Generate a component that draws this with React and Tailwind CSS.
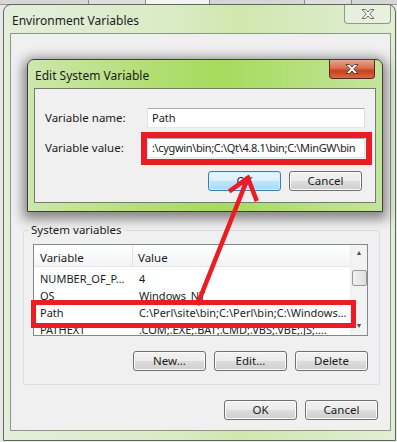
import React from "react";

const rows = [
    ["NUMBER_OF_P…", "4"],
    ["OS", "Windows_NT"],
    ["Path", "C:\\Perl\\site\\bin;C:\\Perl\\bin;C:\\Windows…"],
    ["PATHEXT", ".COM;.EXE;.BAT;.CMD;.VBS;.VBE;.JS;…."],
];

const btn =
    "flex items-center justify-center w-[73px] h-[20px] rounded-[3px] border border-[#707070] bg-[linear-gradient(#f2f2f2_0%,#ebebeb_50%,#dddddd_51%,#cfcfcf_100%)] shadow-[inset_0_0_0_1px_#fbfbfb] text-[11.5px] text-[#1b1b1b]";

const input =
    "h-[20px] w-[218px] flex items-center pl-[4px] bg-white border border-[#abadb3] border-b-[#e3e9ef] border-l-[#e2e3ea] border-r-[#dbdfe6] text-[11px] text-[#1b1b1b] whitespace-nowrap overflow-hidden";

function CloseX({ fill, stroke }) {
    return (
        <svg width="14" height="10" viewBox="0 0 14 10">
            <polygon
                points="1,0.5 4.5,0.5 7,3 9.5,0.5 13,0.5 8.8,5 13,9.5 9.5,9.5 7,7 4.5,9.5 1,9.5 5.2,5"
                fill={fill}
                stroke={stroke}
                strokeWidth="0.9"
                strokeLinejoin="round"
            />
        </svg>
    );
}

export default function App() {
    return (
        <div className="relative w-[397px] h-[442px] overflow-hidden bg-[#e8e8e8] font-['Noto_Sans',sans-serif]">
            {/* tabs of the window behind */}
            <div className="flex h-[5px] bg-[#d6d6d6] border-b border-[#9a9a9a]">
                <div className="w-[89px] border-r border-[#8c8c8c]"></div>
                <div className="w-[57px] border-r border-[#8c8c8c] bg-[#dedede]"></div>
                <div className="w-[64px] border-r border-[#8c8c8c] bg-[#f4f4f4]"></div>
                <div className="w-[95px] border-r border-[#8c8c8c]"></div>
                <div className="w-[47px] border-r border-[#8c8c8c] bg-[#dedede]"></div>
            </div>

            {/* Environment Variables window */}
            <div className="ml-[3px] -mt-[1px] w-[393px] h-[437px] flex flex-col rounded-t-[8px] border border-[#5d6a5a] bg-[linear-gradient(90deg,#e3eedb_0%,#d9ebc3_45%,#cfe7ae_60%,#e1eed5_100%)] pl-[6px] pr-[4px] pb-[9px]">
                <div className="h-[28px] flex items-start">
                    <div className="mt-[7px] ml-[2px] text-[12px] text-[#1b1b1b]">Environment Variables</div>
                    <div className="ml-auto w-[47px] h-[19px] flex items-center justify-center rounded-b-[4px] border border-t-0 border-[#8d9a88] bg-[#e9f1e1]/80">
                        <CloseX fill="#f2f2f2" stroke="#5f5f5f" />
                    </div>
                </div>
                <div className="flex-1 border border-[#8a9886] bg-[#f0f0f0] flex flex-col">
                    <div className="h-[188px]">
                        <div className="mt-[20px] ml-[24px] text-[11.5px] text-[#1b1b1b]">User variables for Flo Flo</div>
                    </div>

                    {/* System variables group */}
                    <fieldset className="ml-[12px] mr-[10px] border border-[#d5dfe5] rounded-[3px] pl-[9px] pr-[11px] pt-[6px] pb-[13px]">
                        <legend className="-ml-[4px] px-[2px] text-[11.5px] leading-[16px] text-[#1b1b1b]">System variables</legend>
                        <div className="h-[92px] border border-[#828790] bg-white flex overflow-hidden">
                            <div className="flex-1 flex flex-col overflow-hidden">
                                <div className="h-[22px] flex text-[11.5px] text-[#1b1b1b] bg-[linear-gradient(#ffffff,#f3f4f6)] border-b border-[#e5e5e5]">
                                    <div className="w-[99px] pl-[6px] pt-[4px] border-r border-[#e3e3e3]">Variable</div>
                                    <div className="pl-[5px] pt-[4px]">Value</div>
                                </div>
                                <div className="pt-[4px]">
                                    {rows.map(([name, value]) => (
                                        <div key={name} className="h-[17px] flex items-center text-[11px] text-[#1b1b1b] whitespace-nowrap">
                                            <div className="w-[100px] pl-[6px] overflow-hidden">{name}</div>
                                            <div className="pl-[5px] overflow-hidden">{value}</div>
                                        </div>
                                    ))}
                                </div>
                            </div>
                            <div className="w-[17px] bg-[#f3f3f3] border-l border-[#ececec] flex flex-col items-center">
                                <div className="h-[17px] flex items-center justify-center text-[7px] text-[#4d4d4d]">▲</div>
                                <div className="w-[15px] h-[16px] mt-[8px] rounded-[2px] border border-[#979797] bg-[linear-gradient(90deg,#f2f2f2,#dedede)]"></div>
                                <div className="mt-auto h-[17px] flex items-center justify-center text-[7px] text-[#4d4d4d]">▼</div>
                            </div>
                        </div>
                        <div className="mt-[15px] flex justify-end gap-[8px]">
                            <div className={btn}>New...</div>
                            <div className={btn}>Edit...</div>
                            <div className={btn}>Delete</div>
                        </div>
                    </fieldset>

                    <div className="mt-[15px] mr-[12px] flex justify-end gap-[8px]">
                        <div className={btn}>OK</div>
                        <div className={btn}>Cancel</div>
                    </div>
                </div>
            </div>

            {/* Edit System Variable dialog */}
            <div className="absolute left-[27px] top-[59px] w-[356px] h-[153px] flex flex-col rounded-t-[7px] border border-[#3a3f38] bg-[linear-gradient(90deg,#cde7ad_0%,#b2de74_35%,#a6db5d_55%,#c4e49d_100%)] px-[6px] pb-[8px] shadow-[0_3px_12px_4px_rgba(0,0,0,0.45)]">
                <div className="h-[28px] flex items-start">
                    <div className="mt-[7px] ml-[1px] text-[12px] text-[#1b1b1b]">Edit System Variable</div>
                    <div className="ml-auto mr-[1px] w-[46px] h-[19px] flex items-center justify-center rounded-b-[4px] border border-t-0 border-[#5b2a1e] bg-[linear-gradient(#e9a48e_0%,#d8704f_45%,#c6401f_60%,#d66a44_100%)]">
                        <CloseX fill="#ffffff" stroke="#3b3b3b" />
                    </div>
                </div>
                <div className="flex-1 border border-[#6f7f68] bg-[#f0f0f0] flex flex-col pt-[19px] pl-[10px] pr-[10px]">
                    <div className="flex items-center">
                        <div className="w-[102px] text-[11.5px] text-[#1b1b1b]">Variable name:</div>
                        <div className={input}>Path</div>
                    </div>
                    <div className="flex items-center mt-[10px]">
                        <div className="w-[102px] text-[11.5px] text-[#1b1b1b]">Variable value:</div>
                        <div className={input + " tracking-[-0.35px]"}>:\cygwin\bin;C:\Qt\4.8.1\bin;C:\MinGW\bin</div>
                    </div>
                    <div className="mt-[13px] mr-[3px] flex justify-end gap-[8px]">
                        <div className="flex items-center justify-center w-[73px] h-[20px] rounded-[3px] border border-[#3c7fb1] bg-[linear-gradient(#eaf6fd_0%,#d9f0fc_50%,#bee6fd_51%,#a7d9f5_100%)] shadow-[inset_0_0_0_1px_#c9f0ff] text-[11.5px] text-[#1b1b1b]">OK</div>
                        <div className={btn}>Cancel</div>
                    </div>
                </div>
            </div>

            {/* annotations */}
            <div className="absolute left-[141px] top-[132px] w-[231px] h-[33px] border-[6px] border-[#ec1c24]"></div>
            <div className="absolute left-[31px] top-[300px] w-[325px] h-[28px] border-[5px] border-[#ec1c24]"></div>
            <svg className="absolute inset-0 pointer-events-none" width="397" height="442">
                <g stroke="#ec1c24" strokeWidth="4.5" strokeLinecap="square" fill="none">
                    <line x1="198" y1="303" x2="247" y2="180" />
                    <line x1="231" y1="190" x2="248" y2="178" />
                    <line x1="248" y1="178" x2="256" y2="199" />
                </g>
            </svg>
        </div>
    );
}
